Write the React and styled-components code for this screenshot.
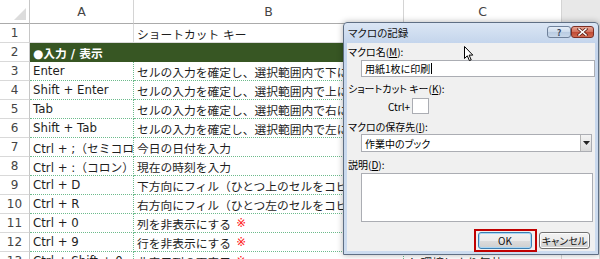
import React from 'react';
import styled, { createGlobalStyle } from 'styled-components';

const Global = createGlobalStyle`
  html, body { margin: 0; padding: 0; background: #fff; }
  body { width: 600px; height: 259px; overflow: hidden; font-family: "Noto Sans CJK JP", "Noto Sans", sans-serif; }
`;

const Stage = styled.div`
  position: relative;
  width: 600px;
  height: 259px;
  overflow: hidden;
  background: #fff;
`;

const Sheet = styled.div`
  display: grid;
  grid-template-columns: 30px 104px 270px 158px 38px;
  grid-template-rows: 24px;
  grid-auto-rows: 19px;
  font-family: "DejaVu Sans", "Noto Sans CJK JP", sans-serif;
  font-size: 11.75px;
  color: #1e1e1e;
`;

const Corner = styled.div`
  position: relative;
  box-sizing: border-box;
  border-right: 1px solid #c6c6c6;
  border-bottom: 1px solid #ababab;
  &::after {
    content: "";
    position: absolute;
    right: 3px;
    bottom: 3px;
    width: 0;
    height: 0;
    border-left: 12px solid transparent;
    border-bottom: 12px solid #dcdcdc;
  }
`;

const ColHead = styled.div`
  box-sizing: border-box;
  display: flex;
  align-items: center;
  justify-content: center;
  font-size: 12.5px;
  color: #444;
  background: ${(p) => (p.$blank ? '#e8e8e8' : '#fff')};
  border-right: 1px solid ${(p) => (p.$blank ? '#e8e8e8' : '#d4d4d4')};
  border-bottom: 1px solid ${(p) => (p.$blank ? '#e8e8e8' : '#ababab')};
`;

const RowHead = styled.div`
  box-sizing: border-box;
  display: flex;
  align-items: center;
  justify-content: center;
  font-size: 12px;
  color: #444;
  border-right: 1px solid #c6c6c6;
  border-bottom: 1px solid #d9d9d9;
`;

const lineFor = (kind) =>
  kind === 'dotted' ? '1px dotted #6dbb8c' : kind === 'band' ? '1px solid #375623' : '1px solid #dadada';

const Cell = styled.div`
  box-sizing: border-box;
  grid-column: span ${(p) => p.$span || 1};
  display: flex;
  align-items: center;
  padding: 0 3px;
  white-space: nowrap;
  overflow: hidden;
  border-right: ${(p) => lineFor(p.$kind)};
  border-bottom: ${(p) => lineFor(p.$kind)};
  background: ${(p) => (p.$kind === 'band' ? '#375623' : '#fff')};
  color: ${(p) => (p.$kind === 'band' ? '#fff' : '#1e1e1e')};
  font-weight: ${(p) => (p.$kind === 'band' ? 700 : 400)};
`;

const Mark = styled.span`
  color: #ff2020;
  margin-left: 5px;
`;

/* ---------- dialog ---------- */

const Dialog = styled.div`
  position: absolute;
  left: 343px;
  top: 22px;
  width: 256px;
  height: 233px;
  box-sizing: border-box;
  border: 1px solid #5f6f84;
  border-radius: 4px 4px 0 0;
  background: linear-gradient(#dbe6f4, #c4d5ec 20px, #cddcef);
  box-shadow: 0 0 6px rgba(0, 0, 0, 0.3);
  display: flex;
  flex-direction: column;
  font-family: "Noto Sans CJK JP", sans-serif;
  font-feature-settings: "palt";
  font-size: 10px;
  color: #000;
`;

const TitleBar = styled.div`
  flex-shrink: 0;
  height: 20px;
  display: flex;
  align-items: flex-start;
  padding: 0 4px 0 4px;
`;

const Title = styled.div`
  flex: 1;
  line-height: 20px;
  font-size: 10.5px;
  color: #111;
`;

const CapBtn = styled.div`
  margin-top: 3px;
  box-sizing: border-box;
  width: ${(p) => (p.$close ? '23px' : '24px')};
  height: 12px;
  border: 1px solid ${(p) => (p.$close ? '#7b2e24' : '#6f819a')};
  border-radius: 3px;
  background: ${(p) =>
    p.$close
      ? 'linear-gradient(#e8a493, #d0705c 50%, #c04a34 51%, #d06a50)'
      : 'linear-gradient(#e6eef8, #ccdaeb 50%, #b9cbe2 51%, #c9d8ea)'};
  display: flex;
  align-items: center;
  justify-content: center;
  font-size: 9px;
  font-weight: 700;
  color: #3a4a60;
  line-height: 1;
`;

const Body = styled.div`
  flex: 1;
  min-height: 0;
  margin: 0 3px 3px;
  background: #f0f0f0;
  padding: 2px 0 0 1px;
  display: flex;
  flex-direction: column;
  & > * {
    flex-shrink: 0;
  }
`;

const Label = styled.div`
  height: 14px;
  line-height: 14px;
  margin-top: ${(p) => p.$gap || 0}px;
  white-space: nowrap;
`;

const U = styled.span`
  text-decoration: underline;
`;

const TextBox = styled.div`
  box-sizing: border-box;
  margin: ${(p) => p.$top || 0}px ${(p) => p.$right || 0}px 0 13px;
  height: ${(p) => p.$h}px;
  border: 1px solid #abadb3;
  background: #fff;
  display: flex;
  align-items: ${(p) => (p.$multi ? 'flex-start' : 'center')};
  padding-left: 3px;
  font-size: 10px;
  white-space: nowrap;
`;

const Caret = styled.span`
  display: inline-block;
  width: 1px;
  height: 11px;
  margin-left: 1px;
  background: #000;
`;

const CtrlRow = styled.div`
  margin-top: 2px;
  height: 16px;
  display: flex;
  align-items: center;
  justify-content: flex-start;
`;

const CtrlText = styled.span`
  margin-left: 40px;
  white-space: nowrap;
`;

const KeyBox = styled.div`
  box-sizing: border-box;
  width: 17px;
  height: 16px;
  margin-left: 2px;
  border: 1px solid #abadb3;
  background: #fff;
`;

const SelectText = styled.div`
  flex: 1;
`;

const DropBtn = styled.div`
  box-sizing: border-box;
  width: 11px;
  height: 16px;
  border-left: 1px solid #b5b5b5;
  background: linear-gradient(#f4f4f4, #dadada);
  display: flex;
  align-items: center;
  justify-content: center;
`;

const ButtonRow = styled.div`
  margin-top: 7px;
  display: flex;
  justify-content: flex-end;
  align-items: center;
  gap: 2px;
  padding-right: 5px;
`;

const Highlight = styled.div`
  border: 2px solid #c00000;
  padding: 1px 3px 1px 2px;
  display: flex;
`;

const Button = styled.div`
  box-sizing: border-box;
  width: ${(p) => p.$w}px;
  height: 17px;
  border: 1px solid ${(p) => (p.$default ? '#3c7fb1' : '#707070')};
  border-radius: 3px;
  background: linear-gradient(#f2f2f2, #ebebeb 50%, #dddddd 51%, #cfcfcf);
  box-shadow: ${(p) => (p.$default ? 'inset 0 0 0 1px #a9d7f5' : 'inset 0 0 0 1px #fcfcfc')};
  display: flex;
  align-items: center;
  justify-content: center;
  font-size: 10px;
  white-space: nowrap;
  color: #111;
`;

const Cursor = styled.svg`
  position: absolute;
  left: 464px;
  top: 46px;
`;

const rows = [
  { n: 1, a: '', b: 'ショートカット キー', kind: 'grid' },
  { n: 2, band: '●入力 / 表示' },
  { n: 3, a: 'Enter', b: 'セルの入力を確定し、選択範囲内で下に移動' },
  { n: 4, a: 'Shift + Enter', b: 'セルの入力を確定し、選択範囲内で上に移動' },
  { n: 5, a: 'Tab', b: 'セルの入力を確定し、選択範囲内で右に移動' },
  { n: 6, a: 'Shift + Tab', b: 'セルの入力を確定し、選択範囲内で左に移動' },
  { n: 7, a: 'Ctrl + ;（セミコロン）', b: '今日の日付を入力' },
  { n: 8, a: 'Ctrl + :（コロン）', b: '現在の時刻を入力' },
  { n: 9, a: 'Ctrl + D', b: '下方向にフィル（ひとつ上のセルをコピー）' },
  { n: 10, a: 'Ctrl + R', b: '右方向にフィル（ひとつ左のセルをコピー）' },
  { n: 11, a: 'Ctrl + 0', b: '列を非表示にする', mark: true },
  { n: 12, a: 'Ctrl + 9', b: '行を非表示にする', mark: true },
  { n: 13, a: 'Ctrl + Shift + 0', b: '非表示列の再表示', mark: true, c: '※ 環境により無効' },
];

export default function App() {
  return (
    <Stage>
      <Global />
      <Sheet>
        <Corner />
        <ColHead>A</ColHead>
        <ColHead>B</ColHead>
        <ColHead>C</ColHead>
        <ColHead $blank />
        {rows.map((r) => (
          <React.Fragment key={r.n}>
            <RowHead>{r.n}</RowHead>
            {r.band ? (
              <>
                <Cell $kind="band" $span={3}>{r.band}</Cell>
                <Cell $kind="grid" />
              </>
            ) : (
              <>
                <Cell $kind={r.kind || 'dotted'}>{r.a}</Cell>
                <Cell $kind={r.kind || 'dotted'}>
                  {r.b}
                  {r.mark && <Mark>※</Mark>}
                </Cell>
                <Cell $kind="grid">{r.c || ''}</Cell>
                <Cell $kind="grid" />
              </>
            )}
          </React.Fragment>
        ))}
      </Sheet>

      <Dialog>
        <TitleBar>
          <Title>マクロの記録</Title>
          <CapBtn>?</CapBtn>
          <CapBtn $close>
            <svg width="11" height="8" viewBox="0 0 11 8">
              <path d="M2 1 L9 7 M9 1 L2 7" stroke="#5a2018" strokeWidth="3" strokeLinecap="square" />
              <path d="M2 1 L9 7 M9 1 L2 7" stroke="#fff" strokeWidth="1.6" strokeLinecap="square" />
            </svg>
          </CapBtn>
        </TitleBar>
        <Body>
          <Label>
            マクロ名(<U>M</U>):
          </Label>
          <TextBox $top={1} $h={17}>
            用紙1枚に印刷
            <Caret />
          </TextBox>
          <Label $gap={5}>
            ショートカット キー(<U>K</U>):
          </Label>
          <CtrlRow>
            <CtrlText>Ctrl+</CtrlText>
            <KeyBox />
          </CtrlRow>
          <Label $gap={6}>
            マクロの保存先(<U>I</U>):
          </Label>
          <TextBox $h={18} $right={3}>
            <SelectText>作業中のブック</SelectText>
            <DropBtn>
              <svg width="7" height="4" viewBox="0 0 7 4">
                <path d="M0 0 H7 L3.5 4 Z" fill="#222" />
              </svg>
            </DropBtn>
          </TextBox>
          <Label $gap={6}>
            説明(<U>D</U>):
          </Label>
          <TextBox $top={1} $h={49} $right={2} $multi />
          <ButtonRow>
            <Highlight>
              <Button $w={54} $default>
                OK
              </Button>
            </Highlight>
            <Button $w={51}>キャンセル</Button>
          </ButtonRow>
        </Body>
      </Dialog>

      <Cursor width="10" height="16" viewBox="0 0 10 16">
        <path
          d="M0.5 0.5 L0.5 12.5 L3.3 9.8 L5.4 14.6 L7.2 13.8 L5.1 9.1 L8.8 9.1 Z"
          fill="#fff"
          stroke="#000"
          strokeWidth="1"
          strokeLinejoin="round"
        />
      </Cursor>
    </Stage>
  );
}
